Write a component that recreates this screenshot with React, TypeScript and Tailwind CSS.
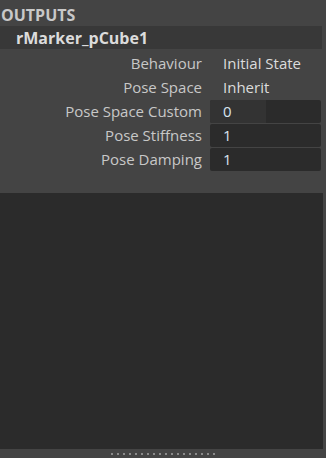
import React from "react";

const font = { fontFamily: '"Open Sans", "Noto Sans", sans-serif' };

function Row({ label, children }: { label: string; children: React.ReactNode }) {
  return (
    <div className="flex items-center h-[24px]">
      <div className="w-[202px] text-right text-[15px] text-[#c8c8c8] leading-none whitespace-nowrap">{label}</div>
      <div className="ml-[8px] flex-1 flex items-center h-full">{children}</div>
    </div>
  );
}

function Field({ value, split }: { value: string; split?: boolean }) {
  return (
    <div className="w-[111px] h-[23px] rounded-[2px] bg-[#2b2b2b] flex overflow-hidden">
      <div className={`h-full flex items-center pl-[13px] text-[15px] text-[#d8e4f0] ${split ? "w-[56px] bg-[#333333]" : ""}`}>{value}</div>
    </div>
  );
}

export default function App() {
  return (
    <div className="w-[326px] h-[458px] bg-[#444444] flex flex-col overflow-hidden" style={font}>
      <div className="flex flex-1 min-h-0">
        <div className="w-[323px] flex flex-col">
          <div className="bg-[#444444] h-[193px] flex flex-col">
            <div className="h-[4px]" />
            <div className="h-[22px] flex items-center pl-[1px] text-[16px] font-bold text-[#c8c8c8] leading-none">OUTPUTS</div>
            <div className="h-[23px] bg-[#383838] w-[322px] flex items-center pl-[16px] text-[16px] font-bold text-[#dcdcdc] leading-none">rMarker_pCube1</div>
            <div className="flex flex-col pt-[2px]">
              <Row label="Behaviour"><span className="pl-[13px] text-[15px] text-[#dcdcdc]">Initial State</span></Row>
              <Row label="Pose Space"><span className="pl-[13px] text-[15px] text-[#dcdcdc]">Inherit</span></Row>
              <Row label="Pose Space Custom"><Field value="0" split /></Row>
              <Row label="Pose Stiffness"><Field value="1" /></Row>
              <Row label="Pose Damping"><Field value="1" /></Row>
            </div>
          </div>
          <div className="flex-1 bg-[#2b2b2b]" />
        </div>
        <div className="flex-1 bg-[#444444]" />
      </div>
      <div className="h-[9px] bg-[#444444] flex items-center justify-center">
        <div className="flex gap-[4px]">
          {Array.from({ length: 18 }).map((_, i) => (
            <div key={i} className="w-[2px] h-[2px] bg-[#8a8a8a]" />
          ))}
        </div>
      </div>
    </div>
  );
}
